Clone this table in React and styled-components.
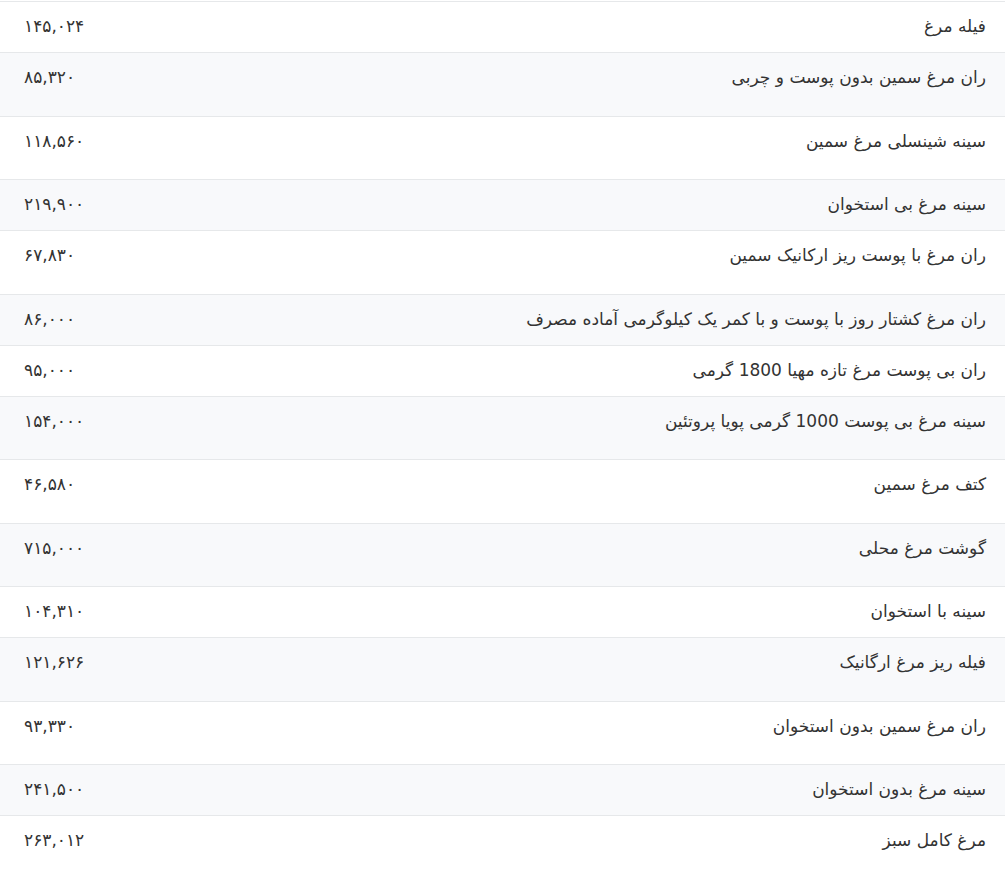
import React from "react";
import styled, { createGlobalStyle } from "styled-components";

const Global = createGlobalStyle`
  html, body { margin: 0; padding: 0; background: #fff; }
  body { font-family: "DejaVu Sans", sans-serif; color: #333; }
`;

const Table = styled.div`
  direction: rtl;
  margin-top: 1px;
  border-top: 1px solid #e6e8ea;
  width: 1005px;
`;

const Row = styled.div`
  display: flex;
  justify-content: space-between;
  align-items: flex-start;
  box-sizing: border-box;
  height: ${(p) => (p.$tall ? "63.5px" : "51px")};
  padding: 11px 19px 0 24px;
  background: ${(p) => (p.$alt ? "#f8f9fb" : "#fff")};
  border-bottom: ${(p) => (p.$last ? "none" : "1px solid #e6e8ea")};
  font-size: 17px;
  line-height: 26px;
`;

const Name = styled.div`
  text-align: right;
`;

const Price = styled.div`
  direction: ltr;
  text-align: left;
`;

const rows = [
  ["فیله مرغ", "۱۴۵,۰۲۴", false],
  ["ران مرغ سمین بدون پوست و چربی", "۸۵,۳۲۰", true],
  ["سینه شینسلی مرغ سمین", "۱۱۸,۵۶۰", true],
  ["سینه مرغ بی استخوان", "۲۱۹,۹۰۰", false],
  ["ران مرغ با پوست ریز ارکانیک سمین", "۶۷,۸۳۰", true],
  ["ران مرغ کشتار روز با پوست و با کمر یک کیلوگرمی آماده مصرف", "۸۶,۰۰۰", false],
  ["ران بی پوست مرغ تازه مهیا 1800 گرمی", "۹۵,۰۰۰", false],
  ["سینه مرغ بی پوست 1000 گرمی پویا پروتئین", "۱۵۴,۰۰۰", true],
  ["کتف مرغ سمین", "۴۶,۵۸۰", true],
  ["گوشت مرغ محلی", "۷۱۵,۰۰۰", true],
  ["سینه با استخوان", "۱۰۴,۳۱۰", false],
  ["فیله ریز مرغ ارگانیک", "۱۲۱,۶۲۶", true],
  ["ران مرغ سمین بدون استخوان", "۹۳,۳۳۰", true],
  ["سینه مرغ بدون استخوان", "۲۴۱,۵۰۰", false],
  ["مرغ کامل سبز", "۲۶۳,۰۱۲", false],
];

export default function App() {
  return (
    <>
      <Global />
      <Table>
        {rows.map(([name, price, tall], i) => (
          <Row key={i} $tall={tall} $alt={i % 2 === 1} $last={i === rows.length - 1}>
            <Name>{name}</Name>
            <Price>{price}</Price>
          </Row>
        ))}
      </Table>
    </>
  );
}
